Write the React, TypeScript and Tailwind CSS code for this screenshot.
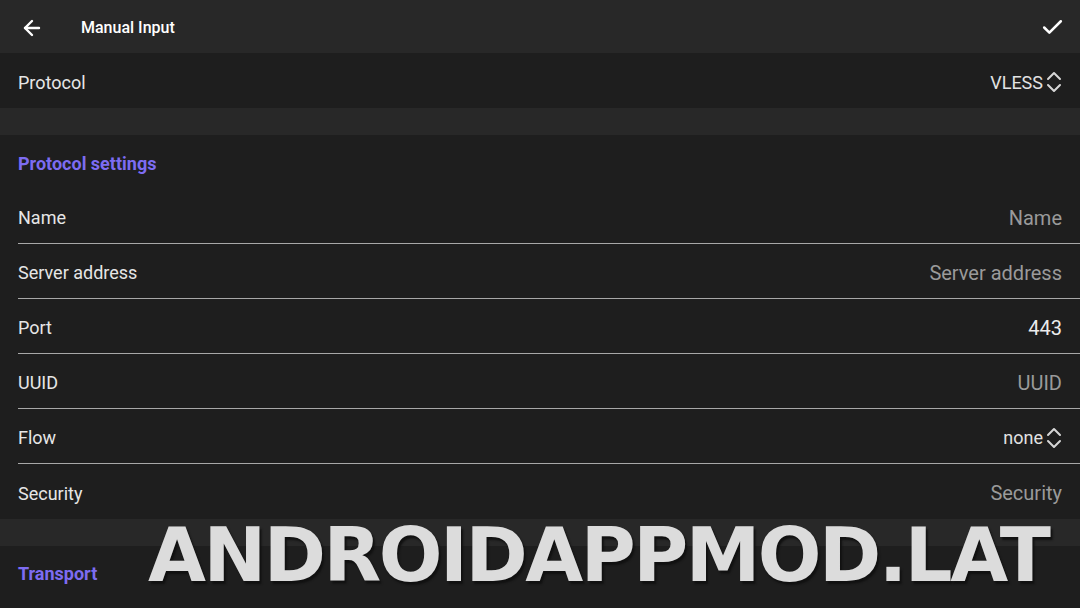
import { ArrowLeft, Check } from 'lucide-react';

type Field = {
  label: string;
  value: string;
  placeholder?: boolean;
  select?: boolean;
};

const fields: Field[] = [
  { label: 'Name', value: 'Name', placeholder: true },
  { label: 'Server address', value: 'Server address', placeholder: true },
  { label: 'Port', value: '443' },
  { label: 'UUID', value: 'UUID', placeholder: true },
  { label: 'Flow', value: 'none', select: true },
  { label: 'Security', value: 'Security', placeholder: true },
];

// spinner-style up/down arrows next to dropdown values
function UpDown() {
  return (
    <svg width="16" height="22" viewBox="0 0 16 22" fill="none" stroke="#d6d6d6" strokeWidth="2" strokeLinecap="round" strokeLinejoin="round">
      <path d="M2 8 L8 2 L14 8" />
      <path d="M2 14 L8 20 L14 14" />
    </svg>
  );
}

function SelectValue({ value }: { value: string }) {
  return (
    <span className="flex items-center gap-[3px] text-[18px] text-[#e2e2e2]">
      {value}
      <UpDown />
    </span>
  );
}

function FieldRow({ field, last }: { field: Field; last: boolean }) {
  return (
    <div className={`ml-[18px] h-[55px] flex items-center justify-between pr-[18px] pt-[3px] ${last ? '' : 'border-b-[1.5px] border-[#a8a8a8]'}`}>
      <span className="text-[#e6e6e6]">{field.label}</span>
      {field.select ? (
        <SelectValue value={field.value} />
      ) : (
        <span className={`text-[20px] ${field.placeholder ? 'text-[#9a9a9a]' : 'text-[#ececec]'}`}>{field.value}</span>
      )}
    </div>
  );
}

export default function App() {
  return (
    <div
      className="relative w-[1080px] h-[608px] overflow-hidden bg-[#1e1e1e] text-[18px]"
      style={{ fontFamily: 'Roboto, "Noto Sans", sans-serif' }}
    >
      {/* toolbar */}
      <div className="h-[53px] bg-[#282828] flex items-center pl-[20px] pr-[15px] pt-[2px]">
        <ArrowLeft className="w-[24px] h-[24px] text-white" strokeWidth={2.4} />
        <span className="ml-[37px] text-[16px] font-medium text-white">Manual Input</span>
        <Check className="ml-auto w-[25px] h-[25px] text-white" strokeWidth={2.4} />
      </div>

      {/* protocol picker */}
      <div className="h-[55px] flex items-center justify-between px-[18px] pt-[3px]">
        <span className="text-[#e6e6e6]">Protocol</span>
        <SelectValue value="VLESS" />
      </div>

      <div className="h-[27px] bg-[#282828]" />

      {/* protocol settings */}
      <div className="h-[54px] flex items-center px-[18px] pt-[2px]">
        <span className="text-[18px] font-bold text-[#7d6cf2]">Protocol settings</span>
      </div>
      {fields.map((f, i) => (
        <FieldRow key={f.label} field={f} last={i === fields.length - 1} />
      ))}

      <div className="h-[27px] bg-[#282828]" />

      <div className="h-[54px] flex items-center px-[18px]">
        <span className="text-[18px] font-bold text-[#7d6cf2]">Transport</span>
      </div>

      {/* watermark */}
      <div
        className="absolute left-[148px] top-[518px] text-[75px] leading-none font-bold text-[#dcdcdc] tracking-[-2.5px] whitespace-nowrap"
        style={{ fontFamily: '"DejaVu Sans", sans-serif', textShadow: '2px 3px 2px #111' }}
      >
        ANDROIDAPPMOD.LAT
      </div>
    </div>
  );
}
